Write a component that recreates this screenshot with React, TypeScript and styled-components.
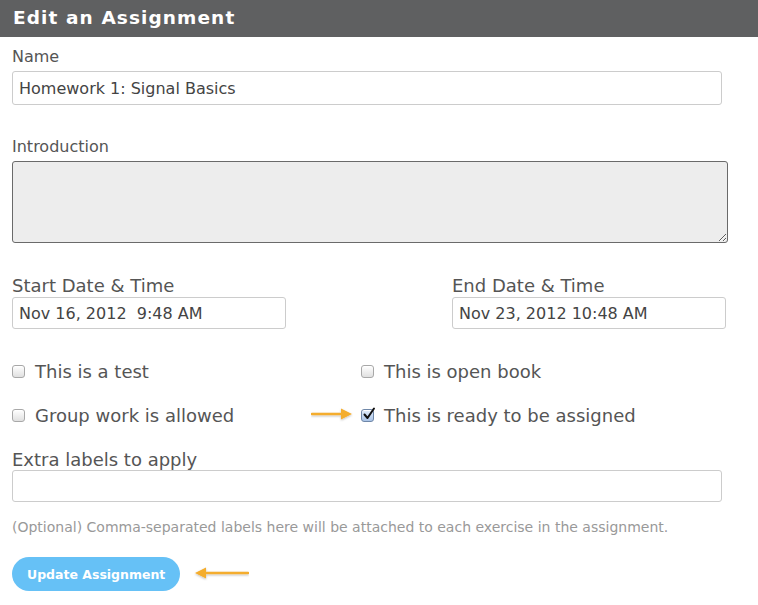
import * as React from "react";
import styled, { createGlobalStyle } from "styled-components";

const GlobalStyle = createGlobalStyle`
	html, body {
		margin: 0;
		padding: 0;
		background: #fff;
	}

	body {
		font-family: "DejaVu Sans", Verdana, sans-serif;
		color: #555;
	}
`;

const Page = styled.div`
	width: 758px;
	min-height: 605px;
	background: #fff;
`;

const TitleBar = styled.h1`
	margin: 0;
	height: 37px;
	padding: 0 13px 2px;
	box-sizing: border-box;
	display: flex;
	align-items: center;
	background: #5f6061;
	color: #fff;
	font-size: 18.5px;
	font-weight: bold;
	letter-spacing: 1.1px;
`;

const Form = styled.form`
	display: flex;
	flex-direction: column;
	padding: 0 12px;
`;

const Label = styled.label<{ $big?: boolean; $top: number }>`
	display: block;
	margin-top: ${(p) => p.$top}px;
	font-size: ${(p) => (p.$big ? "18px" : "16px")};
	line-height: ${(p) => (p.$big ? "20px" : "18px")};
	color: #555;
`;

const TextInput = styled.input<{ $width?: number; $height?: number; $gap?: number }>`
	box-sizing: border-box;
	width: ${(p) => (p.$width ? `${p.$width}px` : "710px")};
	height: ${(p) => p.$height || 34}px;
	margin-top: ${(p) => p.$gap ?? 5}px;
	padding: 0 6px;
	border: 1px solid #ccc;
	border-radius: 3px;
	background: #fff;
	font-family: "DejaVu Sans", Verdana, sans-serif;
	font-size: 16px;
	color: #444;
	outline: none;
`;

const IntroArea = styled.textarea`
	box-sizing: border-box;
	width: 716px;
	height: 82px;
	margin-top: 5px;
	border: 1px solid #6a6a6a;
	border-radius: 3px;
	background: #ededed;
	font-family: "DejaVu Sans", Verdana, sans-serif;
	font-size: 14px;
	resize: both;
	outline: none;
`;

const DateRow = styled.div`
	display: grid;
	grid-template-columns: 440px 274px;
	margin-top: 33px;
`;

const DateField = styled.div`
	display: flex;
	flex-direction: column;
`;

const CheckGrid = styled.div`
	display: grid;
	grid-template-columns: 349px 360px;
	grid-auto-rows: 44px;
	margin-top: 20px;
`;

const CheckItem = styled.label`
	position: relative;
	display: flex;
	align-items: center;
	gap: 10px;
	font-size: 18px;
	color: #555;
	height: 44px;
`;

const Box = styled.span<{ $checked?: boolean }>`
	box-sizing: border-box;
	width: 13px;
	height: 13px;
	flex: 0 0 13px;
	margin-top: 1px;
	border: 1px solid ${(p) => (p.$checked ? "#6f87a8" : "#a8a8a8")};
	border-radius: 3px;
	background: ${(p) =>
		p.$checked
			? "linear-gradient(#e4eefb, #a9c3e6)"
			: "linear-gradient(#ffffff, #e0e0e0)"};
	box-shadow: inset 0 1px 0 #fff;
	position: relative;

	svg {
		position: absolute;
		left: 0px;
		top: -3px;
	}
`;

const PointerArrow = styled.svg<{ $overlay?: boolean }>`
	display: block;
	${(p) =>
		p.$overlay
			? `
		position: absolute;
		left: -50px;
		top: 15px;
	`
			: ""}
`;

const Hint = styled.p`
	margin: 16px 0 0;
	font-size: 14px;
	line-height: 18px;
	color: #999;
`;

const Actions = styled.div`
	display: flex;
	align-items: center;
	gap: 14px;
	margin-top: 21px;
`;

const SubmitButton = styled.button`
	height: 34px;
	padding: 0 15px;
	border: none;
	border-radius: 17px;
	background: #66c1f6;
	color: #fff;
	font-family: "DejaVu Sans", Verdana, sans-serif;
	font-size: 12.5px;
	font-weight: bold;
	cursor: pointer;
`;

const Arrow: React.FC<{ dir: "left" | "right"; length: number; overlay?: boolean }> = ({
	dir,
	length,
	overlay,
}) => {
	const h = 14;
	const mid = 6;
	const tip = dir === "right" ? length - 1 : 1;
	const base = dir === "right" ? length - 12 : 12;
	const tail = dir === "right" ? 1 : length - 1;
	return (
		<PointerArrow
			$overlay={overlay}
			width={length}
			height={h}
			viewBox={`0 0 ${length} ${h}`}
		>
			<defs>
				<filter id={`sh-${dir}`} x="-10%" y="-40%" width="120%" height="180%">
					<feDropShadow dx="0" dy="1" stdDeviation="0.8" floodColor="#000" floodOpacity="0.25" />
				</filter>
			</defs>
			<g filter={`url(#sh-${dir})`}>
				<line x1={tail} y1={mid} x2={base} y2={mid} stroke="#f4ad2f" strokeWidth="2.5" strokeLinecap="round" />
				<polygon points={`${tip},${mid} ${base},${mid - 5.5} ${base},${mid + 5.5}`} fill="#f4ad2f" />
			</g>
		</PointerArrow>
	);
};

const Check: React.FC<{ label: string; checked?: boolean; pointer?: boolean }> = ({
	label,
	checked,
	pointer,
}) => (
	<CheckItem>
		{pointer && <Arrow dir="right" length={42} overlay />}
		<Box $checked={checked}>
			{checked && (
				<svg width="14" height="14" viewBox="0 0 14 14">
					<path d="M2.5 7.5 L5.5 11 L12 1.5" fill="none" stroke="#111" strokeWidth="2" strokeLinecap="round" strokeLinejoin="round" />
				</svg>
			)}
		</Box>
		{label}
	</CheckItem>
);

export default function App() {
	return (
		<Page>
			<GlobalStyle />
			<TitleBar>Edit an Assignment</TitleBar>
			<Form onSubmit={(e) => e.preventDefault()}>
				<Label $top={11}>Name</Label>
				<TextInput defaultValue="Homework 1: Signal Basics" />

				<Label $top={33}>Introduction</Label>
				<IntroArea />

				<DateRow>
					<DateField>
						<Label $big $top={0}>Start Date &amp; Time</Label>
						<TextInput $width={274} $height={32} $gap={1} defaultValue="Nov 16, 2012  9:48 AM" />
					</DateField>
					<DateField>
						<Label $big $top={0}>End Date &amp; Time</Label>
						<TextInput $width={274} $height={32} $gap={1} defaultValue="Nov 23, 2012 10:48 AM" />
					</DateField>
				</DateRow>

				<CheckGrid>
					<Check label="This is a test" />
					<Check label="This is open book" />
					<Check label="Group work is allowed" />
					<Check label="This is ready to be assigned" checked pointer />
				</CheckGrid>

				<Label $big $top={13}>Extra labels to apply</Label>
				<TextInput $height={32} $gap={0} />

				<Hint>
					(Optional) Comma-separated labels here will be attached to each exercise in the assignment.
				</Hint>

				<Actions>
					<SubmitButton type="submit">Update Assignment</SubmitButton>
					<Arrow dir="left" length={55} />
				</Actions>
			</Form>
		</Page>
	);
}
